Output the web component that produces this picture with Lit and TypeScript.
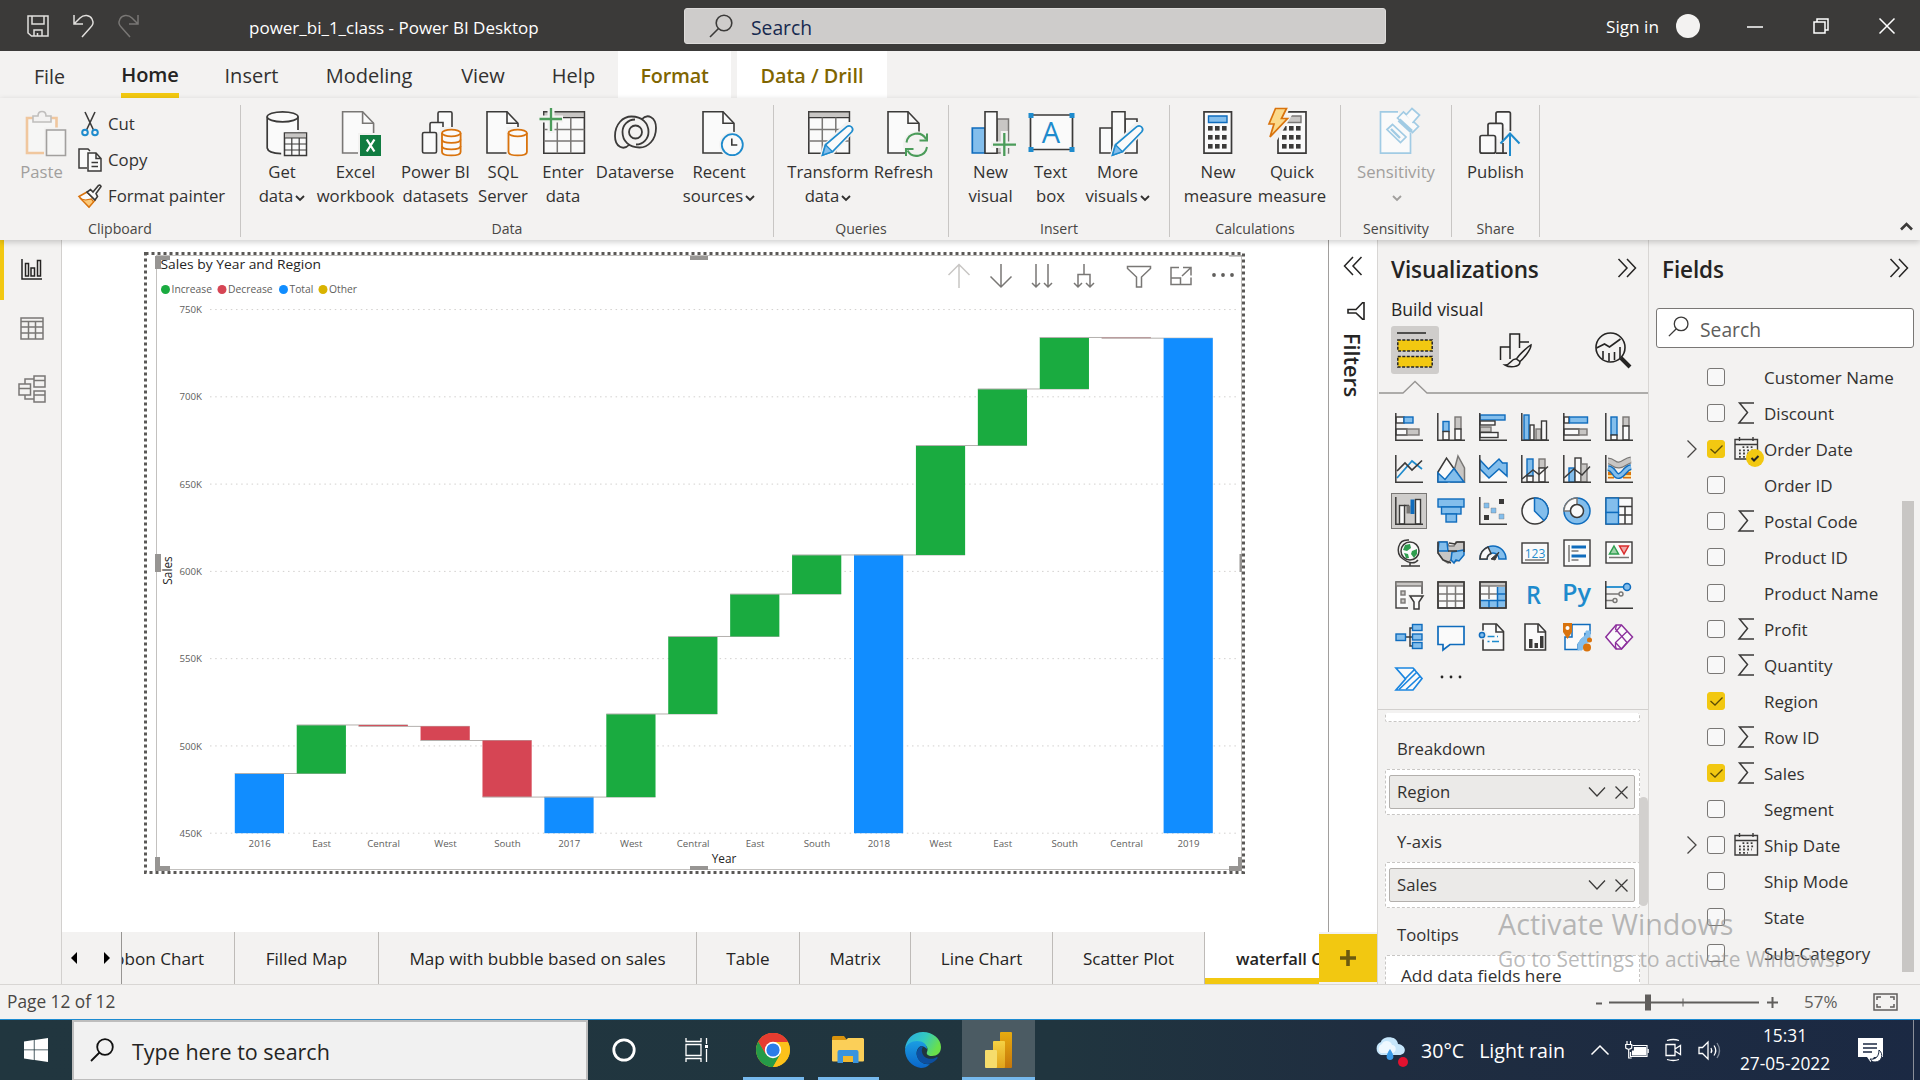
import { LitElement, html, svg, css, nothing } from "lit";
import { customElement } from "lit/decorators.js";
import { classMap } from "lit/directives/class-map.js";

const INK = "#3b3a39";
const GREY = "#797775";
const PAPER = "#fafafa";
const BLUE = "#1e8bcd";
const DEEP = "#0f6cbd";
const SKY = "#83beec";
const SILVER = "#c8c6c4";
const ORANGE = "#d9730d";
const GREEN = "#4b9c5a";

/* ---------- ribbon icon parts (48 x 56 boxes) ---------- */

const doc = (x: number, color = INK) => svg`
  <path d="M${x} 6.8h20l11 11.5V48H${x}z" fill=${PAPER} stroke=${color} stroke-width="1.6"/>
  <path d="M${x + 20} 6.8V18.3h11" fill="none" stroke=${color} stroke-width="1.6"/>`;

const drum = (x: number, w: number, rings: boolean) => svg`
  <path d="M${x - 2} 22h${w + 4}v31h-${w + 4}z" fill="#f3f2f1"/>
  <path d="M${x} 28v19c0 4.6 ${w} 4.6 ${w} 0V28" fill=${PAPER} stroke=${ORANGE} stroke-width="1.8"/>
  <ellipse cx=${x + w / 2} cy="28" rx=${w / 2} ry="3.4" fill=${PAPER} stroke=${ORANGE} stroke-width="1.8"/>
  ${rings ? svg`<path d="M${x} 34.5c0 4.4 ${w} 4.4 ${w} 0M${x} 41c0 4.4 ${w} 4.4 ${w} 0" fill="none" stroke=${ORANGE} stroke-width="1.8"/>` : nothing}`;

const sheet = svg`
  <path d="M4.8 6.8h40.6v41.4H4.8z" fill=${PAPER} stroke=${INK} stroke-width="1.6"/>
  <path d="M4.8 6.8h40.6v5.8H4.8z" fill=${SILVER} stroke=${INK} stroke-width="1.2"/>
  <path d="M4.8 24.5h40.6M4.8 36h40.6M18.3 12.6v35.6M31.8 12.6v35.6" stroke=${GREY} stroke-width="1.5" fill="none"/>`;

const pencil = svg`
  <path d="M15 54l4-14 23-23h9v9L30 49z" fill="#f3f2f1"/>
  <path d="M18.5 50.2l3-10.4L42.8 21.6c3.6-2.4 7.6 1.8 5 5.2L28.6 46.6z" fill=${PAPER} stroke=${BLUE} stroke-width="1.7"/>
  <path d="M18.5 50.2l3-10.4 7 6.8z" fill=${SKY} stroke=${BLUE} stroke-width="1.4"/>`;

const keys = [0, 1, 2].map((r) => [0, 1, 2].map((c) => svg`
  <rect x=${14 + c * 7} y=${21 + r * 9} width="4.6" height="4.6" fill=${INK}/>`));

const lobe = "M18.500 39.500C12.500 46 4 42 4 31C4 19 12 11.500 20.500 11.500C31 11.500 37.500 18 37.500 27C37.500 34 32 39.500 25 39.500";

const ribbonArt: Record<string, unknown> = {
  paste: svg`<g opacity=".55">
    <path d="M9 13h29.5v35H9z" fill=${PAPER} stroke="#eea45c" stroke-width="2.6"/>
    <path d="M15 17v-6h5c0-6 8-6 8 0h5v6z" fill="#f3f2f1" stroke="#979593" stroke-width="1.6"/>
    <path d="M26 22.500h25v31h-25z" fill="#f3f2f1"/>
    <path d="M28.500 25h19v25.500h-19z" fill=${PAPER} stroke="#605e5c" stroke-width="1.6"/></g>`,
  getdata: svg`
    <path d="M9 11v33c1 4 9 5 16 5V28h15V11" fill=${PAPER}/>
    <path d="M40 25V11.500M9.200 11.500V43c.6 3.800 7 5.400 14 5.600" fill="none" stroke=${INK} stroke-width="1.7"/>
    <ellipse cx="24.600" cy="11.800" rx="15.400" ry="5" fill=${PAPER} stroke=${INK} stroke-width="1.7"/>
    <path d="M26.500 28h22v22.500h-22z" fill=${PAPER} stroke=${INK} stroke-width="1.5"/>
    <path d="M27 28.500h21v4.500H27z" fill=${SILVER}/>
    <path d="M26.500 33h22M26.500 39h22M26.500 45h22M33.800 33v17.500M41.200 33v17.500" stroke=${INK} stroke-width="1.2" fill="none"/>`,
  excel: svg`${doc(10.6, GREY)}
    <path d="M26 28h24v26H26z" fill="#f3f2f1"/><path d="M28 30h21v21H28z" fill="#107c41"/>
    <path d="M34.800 34.500l7.600 12M42.400 34.500l-7.600 12" stroke="#fff" stroke-width="2.300" fill="none"/>`,
  datasets: svg`
    <g fill=${PAPER} stroke=${INK} stroke-width="1.6"><path d="M26 24V8.300q0-1.500 1.500-1.500h11q1.500 0 1.500 1.500V23"/>
    <path d="M18 27.500V19q0-1.500 1.500-1.500H31V27"/><rect x="10.500" y="27.500" width="14" height="20.500" rx="1.500"/></g>
    ${drum(30, 18.6, true)}`,
  sql: svg`${doc(8)}${drum(29.5, 18.4, false)}`,
  enter: svg`${sheet}<path d="M0 10.500h24v7H0zM8.500 1h7v27h-7z" fill="#f3f2f1"/>
    <path d="M.5 14H23M12 3v23" stroke=${GREEN} stroke-width="2.300" fill="none"/>`,
  dataverse: svg`<g fill="none" stroke=${INK} stroke-width="1.8">
    <path d=${lobe}/><path d=${lobe} transform="rotate(180 24.500 27)"/>
    <circle cx="24.500" cy="27" r="6.500"/></g>`,
  recent: svg`${doc(8)}<circle cx="37.300" cy="39.700" r="13" fill="#f3f2f1"/>
    <circle cx="37.300" cy="39.700" r="10.500" fill=${PAPER} stroke=${BLUE} stroke-width="1.8"/>
    <path d="M36.800 33.500v6.500h5.500" fill="none" stroke=${INK} stroke-width="1.6"/>`,
  transform: svg`${sheet}${pencil}`,
  refresh: svg`${doc(8)}<circle cx="36.500" cy="39.700" r="13.500" fill="#f3f2f1"/>
    <path d="M26.500 37.500a10.500 10.500 0 0 1 19.500-3.500M47 42a10.500 10.500 0 0 1-19.500 3.500M47 28.500v7h-7.500M26 51v-7h7.500" fill="none" stroke=${GREEN} stroke-width="2"/>`,
  newvisual: svg`
    <path d="M30 14h11.500v34H30z" fill=${SILVER} stroke=${GREY} stroke-width="1.5"/>
    <path d="M5.300 23H18v25H5.300z" fill=${SKY} stroke=${DEEP} stroke-width="1.700"/>
    <path d="M18 6.800h12v41.400H18z" fill=${PAPER} stroke=${INK} stroke-width="1.600"/>
    <path d="M24 36.500h26v6.500H24zM33.800 26h7v27h-7z" fill="#f3f2f1"/>
    <path d="M26 39.700h23M37.300 28v23" stroke=${GREEN} stroke-width="2.300" fill="none"/>`,
  textbox: svg`<path d="M3.500 10h42v34.500h-42z" fill=${PAPER} stroke=${INK} stroke-width="1.700"/>
    ${[[1.5, 8], [42.5, 8], [1.5, 42], [42.5, 42]].map(([x, y]) => svg`<rect x=${x} y=${y} width="5" height="5" fill=${BLUE}/>`)}
    <text x="24" y="38" text-anchor="middle" font-size="29" font-weight="400" fill=${BLUE}>A</text>`,
  morevisuals: svg`<g fill=${PAPER} stroke=${INK} stroke-width="1.600"><path d="M6 23h12v25H6z"/><path d="M31 14h12v34H31z"/><path d="M18 6.800h13v41.400H18z"/></g>${pencil}`,
  measure: svg`<path d="M10 6.800h27.500v41.400H10z" fill=${PAPER} stroke=${INK} stroke-width="1.700"/>
    <path d="M14.500 11h18.500v6.500H14.500z" fill=${SKY} stroke=${DEEP} stroke-width="1.400"/>${keys}`,
  quick: svg`<path d="M10 6.800h28v41.400H10z" fill=${PAPER} stroke=${INK} stroke-width="1.700"/>
    <path d="M20 11h13v6.500H16z" fill=${SILVER} stroke=${GREY} stroke-width="1.400"/>${keys}
    <path d="M6-1h17l-4 11h5L8 37H-2z" fill="#f3f2f1"/>
    <path d="M7.500 3.500h11l-5 10h6L2 32l4-13H1z" fill="#fbd98a" stroke=${ORANGE} stroke-width="1.700"/>`,
  sensitivity: svg`<g fill=${PAPER} stroke="#a1cbe4" stroke-width="1.700"><path d="M38.500 28v20.200h-30V6.800H26"/>
    <path d="M15 24.500l5.500-5 13.500 12.500-5.500 5.500z"/><path d="M19 24l9 9" stroke-width="2.400"/>
    <path d="M25.500 13l6-6 15 14.500-6 6z"/><path d="M34 10l6-6.500 7.500 6.500-7 8"/><path d="M27 15l12.500 11.500" stroke-width="4"/></g>`,
  publish: svg`<g fill=${PAPER} stroke=${INK} stroke-width="1.700"><path d="M24 18V8.500q0-1.700 1.700-1.700h11q1.700 0 1.700 1.700V26M31 48V38"/>
    <path d="M16 30v-10q0-1.700 1.700-1.700H29q1.700 0 1.700 1.700V36M24 48.200h11"/><rect x="8" y="30.500" width="15.500" height="17.700" rx="2"/></g>
    <path d="M38 51V29M28.500 38.500l9.500-10 9.500 10" fill="none" stroke=${BLUE} stroke-width="2"/>`,
};

interface Command { icon: string; lines: string[]; width: number; menu?: boolean; off?: boolean }
interface Group { name: string; width: number; commands: Command[] }

const groups: Group[] = [
  { name: "Data", width: 533, commands: [
    { icon: "getdata", lines: ["Get", "data"], width: 82, menu: true },
    { icon: "excel", lines: ["Excel", "workbook"], width: 65 },
    { icon: "datasets", lines: ["Power BI", "datasets"], width: 95 },
    { icon: "sql", lines: ["SQL", "Server"], width: 40 },
    { icon: "enter", lines: ["Enter", "data"], width: 80 },
    { icon: "dataverse", lines: ["Dataverse"], width: 64 },
    { icon: "recent", lines: ["Recent", "sources"], width: 104, menu: true } ] },
  { name: "Queries", width: 175, commands: [
    { icon: "transform", lines: ["Transform", "data"], width: 108, menu: true },
    { icon: "refresh", lines: ["Refresh"], width: 43 } ] },
  { name: "Insert", width: 221, commands: [
    { icon: "newvisual", lines: ["New", "visual"], width: 83 },
    { icon: "textbox", lines: ["Text", "box"], width: 37 },
    { icon: "morevisuals", lines: ["More", "visuals"], width: 97, menu: true } ] },
  { name: "Calculations", width: 171, commands: [
    { icon: "measure", lines: ["New", "measure"], width: 96 },
    { icon: "quick", lines: ["Quick", "measure"], width: 52 } ] },
  { name: "Sensitivity", width: 111, commands: [
    { icon: "sensitivity", lines: ["Sensitivity", ""], width: 110, menu: true, off: true } ] },
  { name: "Share", width: 88, commands: [
    { icon: "publish", lines: ["Publish"], width: 87 } ] },
];

/* ---------- gallery icons (28 x 28 boxes) ---------- */

const axes = svg`<path d="M.8 0v27.200H28" fill="none" stroke=${INK} stroke-width="1.500"/>`;
type Tone = "b" | "g" | "w" | "k";
const tones: Record<Tone, [string, string]> = { b: [SKY, DEEP], g: [SILVER, GREY], w: [PAPER, INK], k: [DEEP, DEEP] };
const box = (t: Tone, x: number, y: number, w: number, h: number) => svg`
  <rect x=${x} y=${y} width=${w} height=${h} fill=${tones[t][0]} stroke=${tones[t][1]} stroke-width="1.400"/>`;
const line = (d: string, color = INK, w = 1.5) => svg`<path d=${d} fill="none" stroke=${color} stroke-width=${w}/>`;
const shape = (d: string, fill: string, color: string, w = 1.5) => svg`<path d=${d} fill=${fill} stroke=${color} stroke-width=${w}/>`;
const page = svg`<path d="M4 1h13.500l7 7.500V27H4z" fill=${PAPER} stroke=${INK} stroke-width="1.600"/><path d="M17 1v8h7.500" fill="none" stroke=${INK} stroke-width="1.600"/>`;

const gallery: { name: string; art: unknown }[] = [
  { name: "stacked-bar", art: [box("w", 1, 4, 8, 6), box("b", 9, 4, 9, 6), box("w", 1, 16, 11, 6), box("g", 12, 16, 12, 6), axes] },
  { name: "stacked-column", art: [box("b", 6, 8.5, 6, 10), box("w", 6, 18.5, 6, 8.5), box("g", 18, 4, 6, 12), box("w", 18, 16, 6, 11), axes] },
  { name: "clustered-bar", art: [box("b", 1, 2, 25, 5), box("w", 1, 8, 15, 4), box("g", 1, 14, 11, 5), box("w", 1, 19.5, 18, 5), axes] },
  { name: "clustered-column", art: [box("b", 3, 2, 5, 25), box("w", 9, 12, 4, 15), box("g", 15, 16, 5, 11), box("w", 20.500, 8, 5, 19), axes] },
  { name: "full-bar", art: [box("w", 1, 4, 5, 6), box("b", 6.5, 4, 18, 6), box("w", 1, 16, 15, 6), box("g", 16, 16, 8, 6), axes] },
  { name: "full-column", art: [box("b", 6, 4, 6, 18), box("w", 6, 22, 6, 5), box("g", 18, 4, 6, 9), box("w", 18, 13, 6, 14), axes] },
  { name: "line", art: [line("M2 23L17 6l10 8", BLUE, 1.700), line("M2 16l8-8 7 7L27 5.500", INK, 1.700), axes] },
  { name: "area", art: [shape("M21 1l6.500 12v14H14z", SILVER, GREY), shape("M1 17L9.500 3 20 18 10 27H1z", PAPER, INK), shape("M1 27V18l7 6.500 9-11L27 27z", SKY, DEEP)] },
  { name: "stacked-area", art: [shape("M1 24l9-3 9-6 9 8v4H1z", PAPER, PAPER, 0), shape("M1 5l8.500 9L20 4l3.500 4H28v13l-8-7-10 9-9-9z", SKY, DEEP), axes] },
  { name: "line-stacked", art: [box("b", 6, 4, 6, 17), box("w", 6, 21, 6, 6), box("g", 18, 4, 6, 9), box("w", 18, 13, 6, 14), line("M1 24l11-9 6 4.500 9-8"), axes] },
  { name: "line-clustered", art: [box("b", 6, 13, 6, 14), box("w", 12, 3, 6, 24), box("g", 18, 9, 6, 18), line("M1 23l10-9 8 6 8-8.500"), axes] },
  { name: "ribbon", art: [line("M3 16h7m8 0h8M3 21h6m9 0h8", ORANGE, 5), line("M3 16h7m8 0h8M3 21h6m9 0h8", "#fbd98a", 2), line("M3 6c5 0 6 4.500 11 4s7-4.500 12-5", GREY, 7), line("M3 6c5 0 6 4.500 11 4s7-4.500 12-5", SILVER, 4.5), line("M3 13c7 1 6 9 11 8s6-8 12-9", DEEP, 6), line("M3 13c7 1 6 9 11 8s6-8 12-9", SKY, 3.2), axes] },
  { name: "waterfall", art: [box("w", 4.500, 8.500, 5, 18.500), line("M9 8.500h5", INK), shape("M11.500 8.500h4v8h-4z", GREY, GREY, 0), shape("M15.500 2.500h4V17h-4z", DEEP, DEEP, 0), box("w", 20.500, 2.500, 5, 24.500), axes] },
  { name: "funnel", art: [box("b", 1, 2, 26, 8), box("b", 4.500, 10, 19.500, 7), box("b", 9, 17, 10.500, 8)] },
  { name: "scatter", art: [shape("M20 2h5v5h-5zM5 18h5v5H5z", INK, INK, 0), shape("M5 6h5v5H5zM12 11h5v5h-5zM20 17h5v5h-5z", SKY, GREY, .4), axes] },
  { name: "pie", art: [svg`<circle cx="14" cy="14" r="13" fill=${PAPER} stroke=${INK} stroke-width="1.500"/>`, shape("M13.500 1A13 13 0 0 1 23 23.500L13.500 14z", SKY, DEEP)] },
  { name: "donut", art: [svg`<circle cx="14" cy="14" r="13" fill=${SKY} stroke=${DEEP} stroke-width="1.500"/>`, shape("M14 1v6.500A6.500 6.500 0 0 0 7.500 14H1A13 13 0 0 1 14 1z", PAPER, GREY), svg`<circle cx="14" cy="14" r="6.500" fill=${PAPER} stroke=${INK} stroke-width="1.500"/>`] },
  { name: "treemap", art: [box("w", 1, 1, 26, 26), line("M14 9.500h13M14 18h13M20 9.500V27"), box("b", 1, 1, 12.500, 14.500), box("b", 1, 15.500, 12.500, 11.500)] },
  { name: "map", art: [svg`<circle cx="15" cy="12" r="9" fill=${PAPER} stroke=${INK} stroke-width="1.500"/>`, shape("M10 6l5-1 1 4-4 3-4-1zM17 12l5-2v5l-3 4-3-4zM9 14l4 1 1 4-3 0z", "#2f9e4f", "#2f9e4f", 0), line("M14 1C2 0 .5 14 7.500 19.500S20 25 23 21M15 24v3M6 27h19")] },
  { name: "filled-map", art: [shape("M1 3h9l2 4h5l2-4h8v9l-5 9-5 2-3-2-3 3-5-3-5-7z", SILVER, GREY), shape("M2 3h8l1 9H1z", SKY, DEEP), shape("M15 13l12-2v5l-5 6-3-1-2 3-3-3z", SKY, DEEP), line("M1 3v11l5 7 8 3M12 4l6 1 2-2h7v10M11 12h9")] },
  { name: "gauge", art: [shape("M1 20a13 13 0 0 1 26 0h-7a6 6 0 0 0-12 0z", SKY, DEEP), shape("M1 20A13 13 0 0 1 9 8l3 6.500A6 6 0 0 0 8 20z", PAPER, INK), shape("M12 20l8-7-4 8z", INK, INK, 1)] },
  { name: "card", art: [box("w", 1, 4, 26, 20), svg`<text x="14" y="18.500" text-anchor="middle" font-size="12" fill=${BLUE}>123</text>`, line("M4 21h20", GREY)] },
  { name: "multi-card", art: [box("w", 1, 1, 26, 26), line("M6 6v17", GREY), line("M8.500 8H23M8.500 17H23", DEEP, 3), line("M8.500 12h7M8.500 21h7", GREY)] },
  { name: "kpi", art: [box("w", 1, 3, 26, 21), shape("M9 7l4.500 8h-9z", "#9fd3a9", "#2f9e4f"), shape("M19 15l-4.500-8h9z", "#f0a7a7", "#d92c2c"), line("M4 18.500h20", GREY)] },
  { name: "slicer", art: [box("w", 1, 1, 26, 26), box("g", 1, 1, 26, 4), box("g", 6, 10, 4, 4), box("g", 6, 18, 4, 4), shape("M13 13h17v16H13z", "#f3f2f1", "#f3f2f1", 0), shape("M15 15h13l-4 6v7h-5v-7z", PAPER, INK)] },
  { name: "table", art: [box("w", 1, 1, 26, 26), line("M1 13h26M1 20h26M10 5v22M18.500 5v22", GREY), box("g", 1, 1, 26, 4), line("M1 1h26v26H1z")] },
  { name: "matrix", art: [box("w", 1, 1, 26, 26), shape("M18.500 6H26v20H2v-7h16.500z", SKY, SKY, 0), line("M1 13h17M10 5v13", GREY), line("M18.500 6v21M1 19.500h26M10 19.500V27M18.500 13H27", DEEP), box("g", 1, 1, 26, 4), line("M1 1h26v26H1z")] },
  { name: "r-script", art: svg`<text x="12.500" y="23" text-anchor="middle" font-size="25" font-weight="600" fill=${BLUE} textLength="15" lengthAdjust="spacingAndGlyphs">R</text>` },
  { name: "python", art: svg`<text x="13.500" y="20" text-anchor="middle" font-size="24" font-weight="600" fill=${BLUE} textLength="29" lengthAdjust="spacingAndGlyphs">Py</text>` },
  { name: "influencers", art: [line("M1 6h19", BLUE, 1.800), svg`<circle cx="22" cy="6" r="3.500" fill=${SKY} stroke=${DEEP} stroke-width="1.500"/><circle cx="16" cy="13" r="2" fill="none" stroke=${GREY} stroke-width="1.400"/><circle cx="10" cy="19.500" r="2" fill="none" stroke=${GREY} stroke-width="1.400"/>`, line("M1 13h13M1 19.500h7", GREY), axes] },
  { name: "decomposition", art: [line("M10 14h8M18 5h-3v18h3"), box("b", 1, 11, 9.500, 6.500), box("b", 17.500, 1.500, 9.500, 6), box("b", 17.500, 11, 9.500, 6), box("b", 17.500, 19.500, 9.500, 6)] },
  { name: "qa", art: shape("M1 3.500h26v18H13L6 27v-5.500H1z", PAPER, DEEP, 1.700) },
  { name: "narrative", art: [page, line("M8.500 13.500h7M13 18.500h7M8.500 18.500h2M18 13.500h1", BLUE), svg`<circle cx="4" cy="12" r="4.500" fill="#f3f2f1"/><circle cx="3" cy="12" r="2.600" fill=${SKY} stroke=${DEEP} stroke-width="1.500"/>`] },
  { name: "paginated", art: [page, shape("M8 16h3.500v9H8zM13.500 20h3.500v5h-3.500zM19 13h3.500v12H19z", INK, INK, 0)] },
  { name: "arcgis", art: [shape("M9 1.500h18v9h-5v7h-4l-3 4v5H2V14h7z", PAPER, DEEP), shape("M27 8h-4v4l-5 4-3 5v6h4l3-6 5-3z", SKY, SKY, 1), shape("M0 0h9v9l-4.500 7L0 9z", ORANGE, ORANGE, 0), svg`<circle cx="4.500" cy="5" r="2" fill="#fff"/><circle cx="26.500" cy="17" r="2.500" fill=${ORANGE}/><circle cx="24" cy="24.500" r="4" fill=${ORANGE}/>`] },
  { name: "power-apps", art: [shape("M11 2h5.500L27.500 14 16.500 26H11L.800 14z", PAPER, "#8c2f9c"), line("M11.500 2l-1 4L22 19.500M16.500 2l-6 7M22 8.500L10.500 19.500v4l1 2.500M22 19.500l-5.500 6.500-6-6.500", "#8c2f9c", 1.300)] },
  { name: "power-automate", art: [shape("M1 3h17l9 10.500L18 25H1l9.500-11z", PAPER, "#1b86e0", 1.700), line("M10 14L20 4M4 24.500L22 7M11 24.500L25.500 11", "#1b86e0", 1.700)] },
];

/* ---------- chart data, in thousands ---------- */

interface Step { label: string; from: number; to: number; kind: "total" | "up" | "down" }
const steps: Step[] = [
  { label: "2016", from: 450, to: 484.2, kind: "total" },
  { label: "East", from: 484.2, to: 512, kind: "up" },
  { label: "Central", from: 512, to: 511.2, kind: "down" },
  { label: "West", from: 511.2, to: 503.1, kind: "down" },
  { label: "South", from: 503.1, to: 470.7, kind: "down" },
  { label: "2017", from: 450, to: 470.7, kind: "total" },
  { label: "West", from: 470.7, to: 518.3, kind: "up" },
  { label: "Central", from: 518.3, to: 562.7, kind: "up" },
  { label: "East", from: 562.7, to: 587, kind: "up" },
  { label: "South", from: 587, to: 609.4, kind: "up" },
  { label: "2018", from: 450, to: 609.4, kind: "total" },
  { label: "West", from: 609.4, to: 672.1, kind: "up" },
  { label: "East", from: 672.1, to: 704.5, kind: "up" },
  { label: "South", from: 704.5, to: 734, kind: "up" },
  { label: "Central", from: 734, to: 733.6, kind: "down" },
  { label: "2019", from: 450, to: 733.6, kind: "total" },
];
const fills = { total: "#118dff", up: "#1aab40", down: "#d64554" };
const toY = (v: number) => 581.2 - (v - 450) * 1.7455;

@customElement("waterfall-chart")
export class WaterfallChart extends LitElement {
  static styles = css`
    :host { display: block; width: 1101px; height: 622px; position: relative; font-family: "Open Sans", "Noto Sans", sans-serif; }
    svg { display: block; }
    .tick { font-size: 9.7px; fill: #605e5c; }
    .axis { font-size: 11.8px; fill: #252423; }
    .head { font-size: 12.5px; fill: #252423; }
    .key { font-size: 10.3px; fill: #605e5c; }
    .tools { position: absolute; left: 802px; top: 11px; }
  `;

  private plot() {
    return steps.map((s, i) => {
      const x = 90.8 + i * 61.92;
      const top = toY(Math.max(s.from, s.to));
      const h = Math.max(Math.abs(toY(s.from) - toY(s.to)), 0.9);
      return svg`
        <rect x=${x} y=${top} width="49.200" height=${h} fill=${fills[s.kind]} opacity=${h < 1 ? 0.5 : 1}/>
        ${i < steps.length - 1 ? svg`<path d="M${x} ${toY(s.to)}H${x + 111.1}" stroke="#b3b0ad" stroke-width="1"/>` : nothing}
        <text class="tick" x=${x + 24.9} y="595" text-anchor="middle">${s.label}</text>`;
    });
  }

  render() {
    const levels = [750, 700, 650, 600, 550, 500, 450];
    const legend: [string, string, number][] = [["Increase", "#1aab40", 21.5], ["Decrease", "#d64554", 78], ["Total", "#118dff", 139.5], ["Other", "#d9b300", 179]];
    return html`
      <svg width="1101" height="622" viewBox="0 0 1101 622">
        <rect x="1.500" y="1.500" width="1098" height="619" fill="none" stroke="#5a5856" stroke-width="3" stroke-dasharray="3 3"/>
        <rect x="12.500" y="3.500" width="1085" height="614" fill="#fff" stroke="#c3c1bf"/>
        <g fill="#979593">
          <path d="M11 4h15v4h-9v9h-6zM546 4h18v4h-18zM1085 3.500h13v1h-13zM11 302h6v18h-6zM1095.500 302h2.500v18h-2.500zM11 605h5v9h10v5H11zM546 614h18v4h-18zM1094 605h4v14h-13v-5h9z"/>
        </g>
        <text class="head" x="16.500" y="17" textLength="160.500" lengthAdjust="spacingAndGlyphs">Sales by Year and Region</text>
        ${legend.map(([name, color, x]) => svg`<circle cx=${x} cy="37.500" r="4.500" fill=${color}/><text class="key" x=${x + 6} y="41">${name}</text>`)}
        ${levels.map((v) => svg`
          <text class="tick" x="58" y=${toY(v) + 3.6} text-anchor="end">${v}K</text>
          <path d="M66 ${toY(v)}H1094" stroke="#d2d0ce" stroke-width="1" stroke-dasharray="1.500 3.700"/>`)}
        ${this.plot()}
        <text class="axis" text-anchor="middle" transform="translate(28 318.500) rotate(-90)">Sales</text>
        <text class="axis" x="580" y="611" text-anchor="middle">Year</text>
      </svg>
      <svg class="tools" width="292" height="30" viewBox="0 0 292 30" fill="none" stroke="#797775" stroke-width="1.500">
        <path d="M13 25V2M2.500 12L13 1.500 23.500 12" stroke="#c8c6c4"/>
        <path d="M55 1v23M44.500 13.500L55 24l10.500-10.500"/>
        <path d="M90 1v23M86 20l4 4 4-4M102 1v23M98 20l4 4 4-4"/>
        <path d="M138 1v10M132 24V11.500h12V24M128 20l4 4 4-4M140 20l4 4 4-4"/>
        <path d="M181.500 3.500h23v2l-9 8.500v10h-5V14l-9-8.500z"/>
        <path d="M233 4.500h-8v17h20v-7M225 15h9.500v6.500M237 4.500h8v8M245 4.500l-9 8.500"/>
        <g fill="#605e5c" stroke="none"><circle cx="268" cy="12" r="1.900"/><circle cx="277" cy="12" r="1.900"/><circle cx="286" cy="12" r="1.900"/></g>
      </svg>`;
  }
}

interface Field { name: string; icon?: "sum" | "date"; checked?: boolean; expandable?: boolean }
const fields: Field[] = [
  { name: "Customer Name" },
  { name: "Discount", icon: "sum" },
  { name: "Order Date", icon: "date", checked: true, expandable: true },
  { name: "Order ID" },
  { name: "Postal Code", icon: "sum" },
  { name: "Product ID" },
  { name: "Product Name" },
  { name: "Profit", icon: "sum" },
  { name: "Quantity", icon: "sum" },
  { name: "Region", checked: true },
  { name: "Row ID", icon: "sum" },
  { name: "Sales", icon: "sum", checked: true },
  { name: "Segment" },
  { name: "Ship Date", icon: "date", expandable: true },
  { name: "Ship Mode" },
  { name: "State" },
  { name: "Sub-Category" },
];

const lens = (size: number, color: string, w = 1.6) => html`
  <svg width=${size} height=${size} viewBox="0 0 24 24" fill="none" stroke=${color} stroke-width=${w}>
    <circle cx="15" cy="9" r="7.800"/><path d="M9.500 14.500L1 23"/></svg>`;
const chevrons = (flip = false) => html`
  <svg width="20" height="20" viewBox="0 0 20 20" fill="none" stroke="#252423" stroke-width="1.500">
    <path d=${flip ? "M10 1L1.500 10l8.500 9M18.500 1L10 10l8.500 9" : "M1.500 1l8.500 9-8.500 9M10 1l8.500 9-8.500 9"}/></svg>`;
const caret = html`<svg class="caret" width="10" height="7" viewBox="0 0 10 7"><path d="M1 1l4 4 4-4" fill="none" stroke="currentColor" stroke-width="1.900"/></svg>`;
const calendar = html`
  <svg width="26" height="26" viewBox="0 0 26 26" fill="none" stroke="#3b3a39" stroke-width="1.400">
    <path d="M1 3.500h22.500v19.500H1zM1 8.500h22.500M5.500 1v4M19 1v4"/>
    <path d="M5 17.500h13M5 20.800h9M8.500 11.200h12M5 14.400h15.500" stroke-dasharray="1.800 2.300" stroke-width="1.800"/></svg>`;

@customElement("app-root")
export class AppRoot extends LitElement {
  static styles = css`
    :host { display: block; width: 1920px; height: 1080px; overflow: hidden; position: relative; color: #323130;
      font-family: "Open Sans", "Noto Sans", "Liberation Sans", sans-serif; font-size: 16.8px; line-height: 24px; background: #f3f2f1; }
    * { box-sizing: border-box; }
    svg { display: block; flex: none; overflow: visible; }
    .window { display: flex; flex-direction: column; height: 1080px; white-space: nowrap; }

    .titlebar { height: 51px; flex: none; background: #3b3a39; color: #fff; display: flex; align-items: center; }
    .quick { display: flex; gap: 24px; padding-left: 27px; width: 249px; }
    .doc-name { width: 435px; font-size: 17px; padding-top: 4px; }
    .search { width: 702px; height: 36px; background: #cecccb; border: 1px solid #dddbda; border-radius: 3px; color: #16294f;
      display: flex; align-items: center; gap: 18px; padding: 3px 0 0 24px; font-size: 19.3px; margin-top: 1px; }
    .search svg { margin-top: -4px; }
    .sign { margin-left: 220px; width: 70px; font-size: 17.2px; padding-top: 2px; }
    .avatar { width: 24px; height: 24px; border-radius: 50%; background: #f3f2f1; }
    .controls { display: flex; gap: 50px; margin-left: 47px; }

    .tabs { height: 47px; flex: none; display: flex; align-items: stretch; font-size: 20px; }
    .tab { display: flex; justify-content: center; align-items: center; padding-top: 2px; }
    .tab.t0 { width: 99px; font-size: 19.6px; padding-top: 4px; } .tab.t1 { width: 102px; } .tab.t2 { width: 101px; } .tab.t3 { width: 134px; }
    .tab.t4 { width: 94px; } .tab.t5 { width: 87px; } .tab.t6 { width: 113px; margin: 0 6px 0 1px; } .tab.t7 { width: 150px; }
    .tab.active span { font-weight: 600; color: #252423; height: 44px; line-height: 42px; border-bottom: 5px solid #f2c811; letter-spacing: -0.1px; }
    .tab.active { padding-top: 0; align-items: flex-end; }
    .tab.ctx { background: #fff; color: #7f6500; font-weight: 600; font-size: 19.8px; letter-spacing: -0.2px; }
    .tab.t7 { letter-spacing: 0; }

    .ribbon { height: 142px; flex: none; display: flex; padding-top: 7px; box-shadow: 0 2px 6px rgba(0,0,0,.2); z-index: 2; background: #f3f2f1; }
    .group { height: 132px; border-right: 1px solid #c8c6c4; display: flex; flex-direction: column; }
    .group-body { display: flex; height: 112px; flex: none; }
    .group-name { font-size: 14.1px; text-align: center; line-height: 24px; color: #484644; }
    .command { display: flex; flex-direction: column; align-items: center; line-height: 24px; font-size: 16.7px; }
    .command svg.art { margin-bottom: -1px; height: 56px; }
    .command span { display: flex; align-items: center; height: 24px; }
    .caret { margin-left: 2px; margin-top: 4px; }
    .off { color: #a19f9d; }
    .clip { width: 241px; }
    .paste { width: 60px; padding-left: 23px; }
    .small { display: flex; flex-direction: column; padding: 1px 0 0 18px; }
    .small div { height: 36px; display: flex; align-items: center; gap: 6px; }
    .collapse { margin: 117px 0 0 360px; }

    .body { height: 744px; flex: none; display: flex; }
    .nav { width: 62px; border-right: 1px solid #d2d0ce; }
    .nav div { height: 60px; display: flex; align-items: center; justify-content: center; padding: 0 0 3px 2px; }
    .nav .on { border-left: 4px solid #f2c811; padding: 0 3px 1px 0; }
    .center { width: 1315px; display: flex; flex-direction: column; }
    .stage { height: 692px; display: flex; background: #fff; }
    .canvas { width: 1267px; padding: 12px 0 0 82px; border-right: 1px solid #a19f9d; }
    .filters { width: 48px; display: flex; flex-direction: column; align-items: center; padding-top: 16px; }
    .filters svg.funnel { margin: 26px 0 13px 5px; }
    .filters span { writing-mode: vertical-rl; font-weight: 600; font-size: 21.600px; line-height: 28px; color: #252423; margin-right: 2px; }

    .pages { height: 52px; display: flex; background: #f3f2f1; font-size: 17.100px; color: #252423; }
    .arrows { width: 60px; border-right: 1px solid #979593; display: flex; align-items: center; gap: 27px; padding-left: 9px; }
    .page { border-right: 1px solid #bebbb8; display: flex; align-items: center; justify-content: center; overflow: hidden; padding-top: 1px; }
    .p0 { width: 113px; justify-content: flex-end; padding-right: 30px; } .p1 { width: 144px; } .p2 { width: 318px; } .p3 { width: 103px; }
    .p4 { width: 111px; } .p5 { width: 142px; } .p6 { width: 152px; }
    .p7 { width: 114px; justify-content: flex-start; padding: 7px 0 0 31px; background: #fff; border-right: 0; border-bottom: 6px solid #f2c811; font-weight: 600; font-size: 16.500px; }
    .add { width: 58px; height: 48px; margin-top: 2px; background: #f2c811; display: flex; align-items: center; justify-content: center; }

    .panel-head { display: flex; justify-content: space-between; align-items: center; font-weight: 600; color: #252423; font-size: 22.500px; height: 30px; letter-spacing: -0.1px; }
    .panel-head span { padding-top: 3px; }
    .viz { width: 272px; border-left: 1px solid #d8d6d4; border-right: 1px solid #d8d6d4; display: flex; flex-direction: column; }
    .viz .panel-head { margin: 13px 11px 0 13px; }
    .build { font-size: 17.500px; font-weight: 500; color: #252423; margin: 14px 0 5px 13px; }
    .modes { display: flex; align-items: center; padding-left: 13px; height: 48px; }
    .mode-on { width: 48px; height: 48px; background: #cfcdcb; border-radius: 3px; display: flex; align-items: center; justify-content: center; margin-right: 60px; }
    .modes .lens { margin-left: 62px; }
    .notch { margin-top: 6px; }
    .gallery { display: grid; grid-template-columns: repeat(6, 42px); grid-auto-rows: 42px; padding: 12px 0 0 10px; height: 316px; border-bottom: 1px solid #d2d0ce; }
    .cell { width: 36px; height: 36px; margin: 3px; display: flex; align-items: center; justify-content: center; border: 1px solid transparent; }
    .cell.on { background: #cfcdcb; border-color: #797775; }
    .wells { height: 274px; padding: 3px 0 0 7px; overflow: hidden; position: relative; }
    .well { border: 1px dashed #c8c6c4; border-radius: 2px; background: #fff; width: 255px; height: 46px; padding: 5px 4px 5px 3px; }
    .well.stub { height: 9px; border-top: 0; padding: 0; }
    .well-name { height: 47px; line-height: 46px; padding: 4px 0 0 12px; font-size: 16.700px; }
    .pill { height: 34px; background: #ebeae8; border: 1px solid #b3b0ad; border-radius: 2px; display: flex; align-items: center; padding: 0 6px 0 7px; font-size: 16.700px; }
    .pill svg.x { margin-left: 9px; } .pill svg.down { margin-left: auto; }
    .well.hint { font-size: 17.200px; padding: 8px 0 0 15px; }
    .thumb { position: absolute; right: 0; top: 87px; width: 9px; height: 109px; border-radius: 5px; background: #d2d0ce; }

    .fields { width: 271px; position: relative; }
    .fields .panel-head { margin: 13px 11px 0 13px; }
    .find { margin: 25px 6px 0 7px; height: 40px; border: 1px solid #797775; border-radius: 3px; background: #fff; display: flex; align-items: center; gap: 11px; padding: 3px 0 0 11px; font-size: 19.300px; color: #605e5c; }
    .find svg { margin-top: -6px; }
    .list { padding-top: 11px; }
    .field { height: 36px; display: grid; grid-template-columns: 20px 27px 30px 1fr; align-items: center; padding-left: 38px; font-size: 17px; }
    .field .name { padding-top: 2px; }
    .check { width: 18px; height: 18px; border: 1px solid #797775; border-radius: 3px; background: #f8f8f8; display: flex; align-items: center; justify-content: center; }
    .check.yes { background: #f2c811; border-color: #f2c811; }
    .kind { position: relative; display: flex; }
    .kind.sum { padding-left: 4px; }
    .badge { position: absolute; left: 12px; top: 13px; }
    .bar { position: absolute; right: 6px; top: 261px; width: 12px; height: 471px; background: #c8c6c4; }

    .status { height: 35px; flex: none; border-top: 1px solid #d8d6d4; display: flex; align-items: center; padding-left: 7px; font-size: 17.300px; color: #484644; }
    .page-of { width: 1589px; }
    .percent { width: 92px; padding-left: 23px; font-size: 17px; color: #605e5c; }

    .taskbar { height: 61px; flex: none; border-top: 1px solid #1d8bd1; background: linear-gradient(90deg, #21363f 0, #20353f 55%, #1f2d40 72%, #1b2943 100%); display: flex; align-items: center; color: #fff; }
    .start { width: 72px; padding-left: 24px; }
    .type { width: 516px; height: 60px; background: #f1f1f1; border: 2px solid #bdbdbd; border-bottom-width: 1px; color: #252423; font-size: 21.500px; display: flex; align-items: center; gap: 18px; padding: 2px 0 0 16px; }
    .type svg { margin-top: -4px; }
    .app { height: 60px; display: flex; align-items: center; justify-content: center; border-bottom: 3px solid transparent; padding-top: 2px; }
    .a0 { width: 72px; } .a1 { width: 83px; padding-right: 10px; } .a2, .a3 { width: 61px; margin-right: 14px; border-color: #76b9ed; padding-right: 2px; } .a4 { width: 61px; margin-right: 8px; padding-right: 2px; }
    .a5 { width: 73px; background: #4b5b63; border-color: #76b9ed; }
    .weather { margin-left: 339px; display: flex; align-items: center; width: 217px; font-size: 19.600px; gap: 15px; padding-top: 2px; }
    .tray { display: flex; align-items: center; width: 132px; gap: 16px; }
    .clock { width: 124px; font-size: 17.300px; line-height: 28px; text-align: center; margin-right: 11px; }
    .peek { margin-left: 30px; width: 1px; height: 60px; background: #8a8f99; }

    .watermark { position: absolute; left: 1498px; top: 904px; color: rgba(140,140,140,.6); white-space: nowrap; pointer-events: none; z-index: 3; }
    .watermark div { font-size: 28.700px; line-height: 40px; }
    .watermark p { margin: 2px 0 0; font-size: 20.900px; line-height: 26px; }
  `;

  private titlebar() {
    return html`<header class="titlebar">
      <div class="quick">
        <svg width="22" height="22" viewBox="0 0 22 22" fill="none" stroke="#e1dfdd" stroke-width="1.500"><path d="M1 1h20v20H4.500L1 18zM5 1v8h12V1M7 21v-6h8v6M10.500 18v3"/></svg>
        <svg width="21" height="22" viewBox="0 0 21 22" fill="none" stroke="#e1dfdd" stroke-width="1.500"><path d="M1 0v9h9M1 9l6-6C11-1 17 0 19 4s1 6-2 9l-8 9"/></svg>
        <svg width="21" height="22" viewBox="0 0 21 22" fill="none" stroke="#797775" stroke-width="1.500"><path d="M20 0v9h-9M20 9l-6-6C10-1 4 0 2 4s-1 6 2 9l8 9"/></svg>
      </div>
      <div class="doc-name">power_bi_1_class - Power BI Desktop</div>
      <div class="search">${lens(24, "#3b3a39")}Search</div>
      <div class="sign">Sign in</div>
      <div class="avatar"></div>
      <div class="controls">
        <svg width="16" height="16" viewBox="0 0 16 16"><path d="M0 9h16" stroke="#fff" stroke-width="1.500"/></svg>
        <svg width="16" height="16" viewBox="0 0 16 16" fill="none" stroke="#fff" stroke-width="1.500"><path d="M1 4h11v11H1zM4 4V1h11v11h-3"/></svg>
        <svg width="16" height="16" viewBox="0 0 16 16"><path d="M.5.5l15 15M15.500.5l-15 15" stroke="#fff" stroke-width="1.500"/></svg>
      </div>
    </header>`;
  }

  private tabs() {
    return html`<nav class="tabs">${["File", "Home", "Insert", "Modeling", "View", "Help", "Format", "Data / Drill"].map((t, i) => html`
      <div class="tab t${i} ${i === 1 ? "active" : ""} ${i > 5 ? "ctx" : ""}"><span>${t}</span></div>`)}</nav>`;
  }

  private ribbon() {
    return html`<section class="ribbon">
      <div class="group clip">
        <div class="group-body">
          <div class="command paste off"><svg class="art" width="48" height="56" viewBox="0 0 48 56">${ribbonArt.paste}</svg><span>Paste</span></div>
          <div class="small">
            <div><svg width="24" height="24" viewBox="0 0 24 24" fill="none" stroke="#3b3a39" stroke-width="1.600"><path d="M7 0l8.500 18M17 0L8.500 18"/><g stroke=${BLUE} stroke-width="2"><circle cx="7" cy="20.500" r="2.800"/><circle cx="17" cy="20.500" r="2.800"/></g></svg>Cut</div>
            <div><svg width="24" height="24" viewBox="0 0 24 24" fill=${PAPER} stroke="#3b3a39" stroke-width="1.500"><path d="M9 20H1V1h9l2 2M10 5h8l5 5.500V23H10zM18 5v5.500h5M13.500 14.500H20M13.500 18.500H20"/></svg>Copy</div>
            <div><svg width="24" height="24" viewBox="0 0 24 24" fill=${PAPER} stroke="#3b3a39" stroke-width="1.600"><path d="M1 12.500L9 8l8 8-6 7z" stroke=${ORANGE}/><path d="M3 15l4.500 1 6-1 2 3-4.500 5z" fill="#fbc97a" stroke=${ORANGE} stroke-width="1.200"/><path d="M15 8l5.500-6.500q2-1 2.500 1L18 9.500l1.500 3-2.500 3.500L9 8l3.500-2.500z"/></svg>Format painter</div>
          </div>
        </div>
        <div class="group-name">Clipboard</div>
      </div>
      ${groups.map((g) => html`
        <div class="group" style="width:${g.width}px">
          <div class="group-body">${g.commands.map((c) => html`
            <div class="command ${classMap({ off: !!c.off })}" style="width:${c.width}px">
              <svg class="art" width="48" height="56" viewBox="0 0 48 56">${ribbonArt[c.icon]}</svg>
              ${c.lines.map((l, i) => html`<span>${l}${c.menu && i === c.lines.length - 1 ? caret : nothing}</span>`)}
            </div>`)}</div>
          <div class="group-name">${g.name}</div>
        </div>`)}
      <svg class="collapse" width="13" height="9" viewBox="0 0 13 9"><path d="M1 7.500L6.500 2 12 7.500" fill="none" stroke="#3b3a39" stroke-width="2.600"/></svg>
    </section>`;
  }

  private nav() {
    return html`<aside class="nav">
      <div class="on"><svg width="21" height="21" viewBox="0 0 21 21" fill="none" stroke="#252423" stroke-width="1.500"><path d="M1 0v20h20M4.500 4.500h3V17h-3zM10 9h3.500v8H10zM16.500 1.500h3V17h-3z"/></svg></div>
      <div><svg width="24" height="23" viewBox="0 0 24 23" fill="none" stroke="#797775" stroke-width="1.500"><path d="M1 1h22v21H1zM1 4.500h22M1 10h22M1 16h22M8.500 4.500V22M15.500 4.500V22"/></svg></div>
      <div><svg width="28" height="28" viewBox="0 0 28 28" fill="none" stroke="#797775" stroke-width="1.500"><path d="M1 9h11.500v11H1zM1 13.500h11.500M16 1h11v11H16zM16 5.500h11M16 16h11v11H16zM16 20h11M7 9V4h9M7 20v4h9"/></svg></div>
    </aside>`;
  }

  private pages() {
    const names = ["Ribbon Chart", "Filled Map", "Map with bubble based on sales", "Table", "Matrix", "Line Chart", "Scatter Plot", "waterfall Chart"];
    return html`<div class="pages">
      <div class="arrows"><svg width="6" height="12" viewBox="0 0 6 12"><path d="M6 0v12L0 6z" fill="#000"/></svg><svg width="6" height="12" viewBox="0 0 6 12"><path d="M0 0v12l6-6z" fill="#000"/></svg></div>
      ${names.map((n, i) => html`<div class="page p${i}"><span>${n}</span></div>`)}
      <div class="add"><svg width="16" height="16" viewBox="0 0 16 16"><path d="M8 0v16M0 8h16" stroke="#6b5a10" stroke-width="3.600"/></svg></div>
    </div>`;
  }

  private well(name: string, value: string) {
    return html`<div class="well-name">${name}</div>
      <div class="well"><div class="pill">${value}
        <svg class="down" width="18" height="10" viewBox="0 0 18 10"><path d="M1 .5L9 9l8-8.500" fill="none" stroke="#3b3a39" stroke-width="1.300"/></svg>
        <svg class="x" width="13" height="13" viewBox="0 0 13 13"><path d="M.5.5l12 12M12.500.5l-12 12" fill="none" stroke="#3b3a39" stroke-width="1.300"/></svg>
      </div></div>`;
  }

  private visualizations() {
    return html`<section class="viz">
      <div class="panel-head"><span>Visualizations</span>${chevrons()}</div>
      <div class="build">Build visual</div>
      <div class="modes">
        <div class="mode-on"><svg width="36" height="36" viewBox="0 0 36 36" fill="#f2c811" stroke="#252423" stroke-width="1.500"><path d="M0 1h29"/><path d="M.8 8h34.400v11H.8zM.8 24.500h34.400v10.500H.8z" stroke-dasharray="3 1.500"/></svg></div>
        <svg width="34" height="36" viewBox="0 0 34 36" fill="none" stroke="#252423" stroke-width="1.500"><path d="M1.500 28V15H11M11 27V2h9.500v14M20.500 10H30"/><path d="M32 13c-4 2-13 11-14.500 14l3.500 2.500C24 27 32 18 32 13z"/><path d="M17 27c-5-.500-5 6-11 6 4 2.500 15 3 15-3.500"/></svg>
        <svg class="lens" width="36" height="36" viewBox="0 0 36 36" fill="none" stroke="#252423" stroke-width="1.600"><circle cx="15.500" cy="15.500" r="14.500"/><path d="M1.500 16l8-4 5 3 11-8M8 27v-8M14 29v-8M19.500 28v-8M25 26V15"/><path d="M26 26l9 9" stroke-width="4"/></svg>
      </div>
      <svg class="notch" width="270" height="14" viewBox="0 0 270 14"><path d="M1 13h24L37 1.500 49 13h221" fill="none" stroke="#979593" stroke-width="1.300"/></svg>
      <div class="gallery">
        ${gallery.map((g) => html`<div class="cell ${classMap({ on: g.name === "waterfall" })}"><svg width="28" height="28" viewBox="0 0 28 28">${g.art}</svg></div>`)}
        <div class="cell"><svg width="22" height="4" viewBox="0 0 22 4" fill="#252423"><circle cx="2" cy="0" r="1.400"/><circle cx="11" cy="0" r="1.400"/><circle cx="20" cy="0" r="1.400"/></svg></div>
      </div>
      <div class="wells">
        <div class="well stub"></div>
        ${this.well("Breakdown", "Region")}${this.well("Y-axis", "Sales")}
        <div class="well-name">Tooltips</div>
        <div class="well hint">Add data fields here</div>
        <div class="thumb"></div>
      </div>
    </section>`;
  }

  private fieldsPane() {
    return html`<section class="fields">
      <div class="panel-head"><span>Fields</span>${chevrons()}</div>
      <div class="find">${lens(21, "#3b3a39", 1.5)}Search</div>
      <div class="list">${fields.map((f) => html`
        <div class="field">
          <span>${f.expandable ? html`<svg width="10" height="18" viewBox="0 0 10 18"><path d="M.5.5L9 9 .5 17.500" fill="none" stroke="#484644" stroke-width="1.300"/></svg>` : nothing}</span>
          <span class="check ${classMap({ yes: !!f.checked })}">${f.checked ? html`<svg width="13" height="9" viewBox="0 0 13 9"><path d="M.5 4L5 8l7.500-7.500" fill="none" stroke="#5c4d06" stroke-width="1.300"/></svg>` : nothing}</span>
          <span class="kind ${classMap({ sum: f.icon === "sum" })}">
            ${f.icon === "sum" ? html`<svg width="16" height="22" viewBox="0 0 16 22"><path d="M16 1H1.500L9.500 10.500 1 21H16" fill="none" stroke="#3b3a39" stroke-width="1.500"/></svg>` : nothing}
            ${f.icon === "date" ? calendar : nothing}
            ${f.icon === "date" && f.checked ? html`<svg class="badge" width="18" height="18" viewBox="0 0 18 18"><circle cx="9" cy="9" r="9" fill="#f2c811"/><path d="M5.500 9l2.500 2.500 4.500-4.500" fill="none" stroke="#252423" stroke-width="2"/></svg>` : nothing}
          </span>
          <span class="name">${f.name}</span>
        </div>`)}</div>
      <div class="bar"></div>
    </section>`;
  }

  private status() {
    return html`<footer class="status"><span class="page-of">Page 12 of 12</span>
      <svg width="185" height="20" viewBox="0 0 185 20" fill="none" stroke="#605e5c">
        <path d="M0 11.500h6" stroke-width="2"/><path d="M13 10.500h150" stroke-width="2"/><path d="M87 6.500v8" stroke-width="1"/>
        <path d="M49 2.500h6v16h-6z" fill="#605e5c" stroke="none"/><path d="M171 10.500h11M176.500 5v11" stroke-width="2"/></svg>
      <span class="percent">57%</span>
      <svg width="25" height="18" viewBox="0 0 25 18" fill="none" stroke="#605e5c" stroke-width="1.500"><path d="M1 1h23v16H1zM4 7V4h4M17 4h4v3M21 11v3h-4M8 14H4v-3"/></svg>
    </footer>`;
  }

  private taskbar() {
    return html`<footer class="taskbar">
      <div class="start"><svg width="24" height="24" viewBox="0 0 24 24" fill="#fff"><path d="M0 3.500L9.800 2v9.500H0zM10.600 1.900L24 0v11.500H10.600zM0 12.300h9.800V22L0 20.500zM10.600 12.300H24V24l-13.400-1.900z"/></svg></div>
      <div class="type">${lens(24, "#111", 1.8)}Type here to search</div>
      <div class="app a0"><svg width="24" height="24" viewBox="0 0 24 24"><circle cx="12" cy="12" r="10.200" fill="none" stroke="#fff" stroke-width="2.800"/></svg></div>
      <div class="app a1"><svg width="24" height="24" viewBox="0 0 24 24" fill="none" stroke="#fff" stroke-width="1.300"><path d="M1 0v3.500h15V0M1 6.500h15v11H1zM1 24v-3.500h15V24M21.500 0v6M21.500 11v13"/><path d="M20 7h3v3h-3z" fill="#fff" stroke="none"/></svg></div>
      <div class="app a2"><svg width="34" height="34" viewBox="0 0 34 34"><circle cx="17" cy="17" r="17" fill="#fbbc05"/><path d="M17 17L2.300 8.500A17 17 0 0 1 31.700 8.500z" fill="#ea4335"/><path d="M2.300 8.500A17 17 0 0 0 17 34l7.500-13L9.500 20z" fill="#259b48"/><path d="M17 9h14.900A17 17 0 0 1 17 34l7.500-13z" fill="#fcc21b"/><path d="M2.300 8.500L9.700 21 17 9h14.900A17 17 0 0 0 2.300 8.500z" fill="#e63c30"/><circle cx="17" cy="17" r="8.200" fill="#fff"/><circle cx="17" cy="17" r="6.600" fill="#2a7de8"/></svg></div>
      <div class="app a3"><svg width="32" height="28" viewBox="0 0 32 28"><path d="M0 1.500Q0 0 1.500 0H12l3 4H0z" fill="#d9930d"/><path d="M0 4h14l2-2h15l1 1v21.500q0 1-1 1H1q-1 0-1-1z" fill="#fbcf58"/><path d="M5.500 27V16q0-2 2-2h17q2 0 2 2v11H21v-7H11v7z" fill="#3a94dd"/><path d="M11 20h10v6H11z" fill="#f3b92d"/></svg></div>
      <div class="app a4"><svg width="36" height="36" viewBox="0 0 36 36">
        <defs><linearGradient id="e1" x1="0" y1="0" x2="1" y2=".4"><stop offset="0" stop-color="#2aa8e8"/><stop offset=".55" stop-color="#33c9c0"/><stop offset="1" stop-color="#6ae04a"/></linearGradient>
        <linearGradient id="e2" x1="0" y1="0" x2="0" y2="1"><stop offset="0" stop-color="#1b9de2"/><stop offset="1" stop-color="#0a66c9"/></linearGradient></defs>
        <path d="M0 17C1 7 8 0 18 0s18 7 18 15c0 6-4 9-9 9-4 0-6-2-5-4 2-4-1-8-6-8C9 12 3 14 0 17z" fill="url(#e1)"/>
        <path d="M0 18c1-6 7-9 12-9 6 0 10 3 10 8-2-2-4-3-6-3-4 2-5 6-4 10 2 6 7 9 13 8-3 3-6 4-9 4C7 35 0 27 0 18z" fill="url(#e2)"/>
        <path d="M16 14c-4 3-5 7-4 10 2 8 12 11 19 4 2-2 2-3 1-3-7 4-14 1-15-5-.4-2 0-4 1-5z" fill="#0d4f9e"/></svg></div>
      <div class="app a5"><svg width="28" height="36" viewBox="0 0 28 36"><defs>
        <linearGradient id="p1" x1="0" y1="0" x2="0" y2="1"><stop offset="0" stop-color="#e8ab10"/><stop offset="1" stop-color="#c4760b"/></linearGradient>
        <linearGradient id="p2" x1="0" y1="0" x2="0" y2="1"><stop offset="0" stop-color="#f5d144"/><stop offset="1" stop-color="#e0a31a"/></linearGradient></defs>
        <rect x="15" width="12" height="36" rx="1" fill="url(#p1)"/><rect x="8" y="9" width="12" height="27" rx="1" fill="url(#p2)"/><rect y="18" width="12" height="18" rx="1" fill="#f6dc6c"/></svg></div>
      <div class="weather">
        <svg width="32" height="28" viewBox="0 0 32 28"><path d="M7 18a7 7 0 0 1 0-13c1-6 16-7 17 2 9 1 9 11 1 11z" fill="#c6e6fb"/><path d="M7 16a5 5 0 0 1 1-9c1-4 9-4 10 1 5 0 5 8 0 8z" fill="#eef8ff"/><path d="M16 12c5 7 4 11 0 11s-5-4 0-11z" fill="#3b9be8"/><circle cx="29" cy="25" r="5" fill="#e3122f"/></svg>
        <span>30°C</span><span>Light rain</span></div>
      <div class="tray">
        <svg width="18" height="10" viewBox="0 0 18 10" fill="none" stroke="#fff" stroke-width="1.500"><path d="M.5 9.500L9 1l8.500 8.500"/></svg>
        <svg width="24" height="18" viewBox="0 0 24 18" fill="none" stroke="#fff" stroke-width="1.200"><path d="M7.500 4.500h14.500v11H5.500V11"/><path d="M9.500 6.500H20.500v7.500H7.500V10h2z" fill="#fff"/><path d="M23.200 8v4M2 0v3M5.500 0v3M.7 3.500h6V7q-3 2.500-6 0zM3.700 8v9h3"/></svg>
        <svg width="17" height="22" viewBox="0 0 17 22" fill="none" stroke="#fff" stroke-width="1.300"><path d="M1 5.500h9v11H1zM10 10l5.500-3.500v9L10 12M2 1.500Q8.500-.500 14 1.500M2 20.500q6.500 2 12 0"/></svg>
        <svg width="23" height="19" viewBox="0 0 23 19" fill="none" stroke="#fff" stroke-width="1.300"><path d="M1 6.500h3.500L10 1v17l-5.500-5.500H1zM13 7q1.500 2.500 0 5"/><path d="M16 4.500q3.500 5 0 10"/><path d="M19 2q5 7.500 0 15" stroke="#7d8796"/></svg>
      </div>
      <div class="clock">15:31<br>27-05-2022</div>
      <svg width="25" height="25" viewBox="0 0 25 25"><path d="M0 0h25v19H16l-3.500 5-3.500-5H0z" fill="#fff"/><path d="M5 6h14M5 10h14M5 14h9" stroke="#1b2943" stroke-width="1.400"/><path d="M21 12c5 4 3 12-4 12-2 0-4-1-5-3 6 1 9-3 9-9z" fill="#fff" stroke="#1b2943" stroke-width="1"/></svg>
      <div class="peek"></div>
    </footer>`;
  }

  render() {
    return html`<div class="window">
      ${this.titlebar()}${this.tabs()}${this.ribbon()}
      <main class="body">
        ${this.nav()}
        <div class="center">
          <div class="stage">
            <div class="canvas"><waterfall-chart></waterfall-chart></div>
            <div class="filters">${chevrons(true)}
              <svg class="funnel" width="18" height="18" viewBox="0 0 18 18"><path d="M17 .8v16.400h-1.500L9 11H1V7.500h8l6.500-6.700z" fill="none" stroke="#252423" stroke-width="1.600"/></svg>
              <span>Filters</span></div>
          </div>
          ${this.pages()}
        </div>
        ${this.visualizations()}${this.fieldsPane()}
      </main>
      ${this.status()}${this.taskbar()}
    </div>
    <div class="watermark"><div>Activate Windows</div><p>Go to Settings to activate Windows.</p></div>`;
  }
}
